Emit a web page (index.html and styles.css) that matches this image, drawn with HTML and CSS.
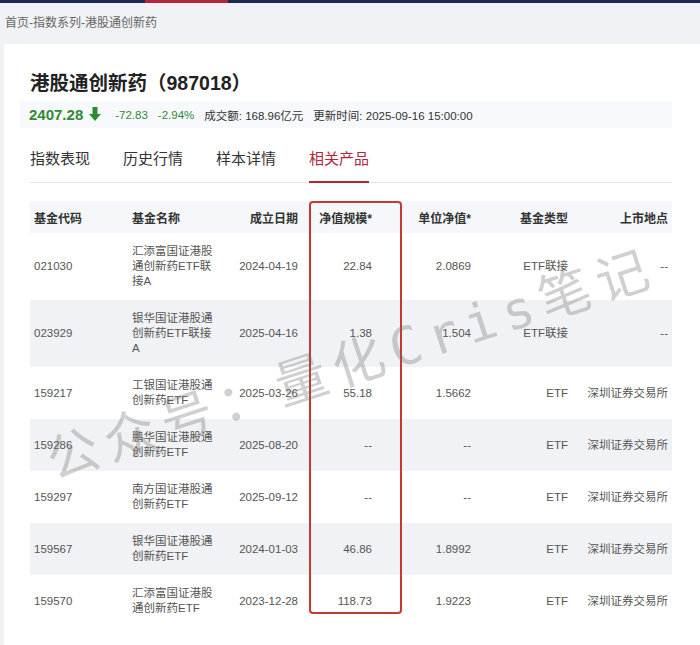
FILE: index.html
```html
<!DOCTYPE html>
<html lang="zh">
<head>
<meta charset="utf-8">
<link rel="stylesheet" href="styles.css">
</head>
<body>
<div class="topbar"><span class="topbar-active"></span></div>
<div class="crumb">首页-指数系列-港股通创新药</div>
<div class="card">
  <h1 class="title">港股通创新药（987018）</h1>
  <div class="stats">
    <span class="price">2407.28</span>
    <svg class="arrow" width="12" height="15" viewBox="0 0 12 15"><rect x="3.5" y="0" width="5" height="8" fill="#2f8a34"/><polygon points="0,7 12,7 6,14" fill="#2f8a34"/></svg>
    <span class="chg">-72.83</span>
    <span class="chg">-2.94%</span>
    <span class="info">成交额: 168.96亿元</span>
    <span class="info">更新时间: 2025-09-16 15:00:00</span>
  </div>
  <div class="tabs">
    <span class="tab">指数表现</span>
    <span class="tab">历史行情</span>
    <span class="tab">样本详情</span>
    <span class="tab active">相关产品</span>
  </div>
  <div class="table-wrap">
    <table class="funds">
      <colgroup>
        <col class="c1"><col class="c2"><col class="c3"><col class="c4"><col class="c5"><col class="c6"><col class="c7">
      </colgroup>
      <thead>
        <tr><th class="l">基金代码</th><th class="l">基金名称</th><th>成立日期</th><th>净值规模*</th><th>单位净值*</th><th>基金类型</th><th>上市地点</th></tr>
      </thead>
      <tbody>
        <tr><td class="l">021030</td><td class="l name">汇添富国证港股通创新药ETF联接A</td><td>2024-04-19</td><td>22.84</td><td>2.0869</td><td>ETF联接</td><td>--</td></tr>
        <tr class="alt"><td class="l">023929</td><td class="l name">银华国证港股通创新药ETF联接A</td><td>2025-04-16</td><td>1.38</td><td>1.504</td><td>ETF联接</td><td>--</td></tr>
        <tr><td class="l">159217</td><td class="l name">工银国证港股通创新药ETF</td><td>2025-03-26</td><td>55.18</td><td>1.5662</td><td>ETF</td><td>深圳证券交易所</td></tr>
        <tr class="alt"><td class="l">159286</td><td class="l name">鹏华国证港股通创新药ETF</td><td>2025-08-20</td><td>--</td><td>--</td><td>ETF</td><td>深圳证券交易所</td></tr>
        <tr><td class="l">159297</td><td class="l name">南方国证港股通创新药ETF</td><td>2025-09-12</td><td>--</td><td>--</td><td>ETF</td><td>深圳证券交易所</td></tr>
        <tr class="alt"><td class="l">159567</td><td class="l name">银华国证港股通创新药ETF</td><td>2024-01-03</td><td>46.86</td><td>1.8992</td><td>ETF</td><td>深圳证券交易所</td></tr>
        <tr><td class="l">159570</td><td class="l name">汇添富国证港股通创新药ETF</td><td>2023-12-28</td><td>118.73</td><td>1.9223</td><td>ETF</td><td>深圳证券交易所</td></tr>
      </tbody>
    </table>
    <div class="highlight"></div>
  </div>
</div>
<div class="watermark">公众号：量化Cris笔记</div>
</body>
</html>
```
FILE: styles.css
```css
html, body {
  margin: 0;
  padding: 0;
}
body {
  background: #f0f2f5;
  font-family: "Liberation Sans", "Noto Sans CJK SC", sans-serif;
  color: #333;
  width: 700px;
  height: 645px;
  overflow: hidden;
  position: relative;
}
.topbar {
  height: 3px;
  background: #1d2a57;
  display: flex;
}
.topbar-active {
  margin-left: 145px;
  width: 83px;
  background: #b3263a;
}
.crumb {
  height: 41px;
  line-height: 40px;
  padding-left: 5px;
  font-size: 12px;
  color: #666;
}
.card {
  background: #fff;
  margin-left: 4px;
  padding: 25px 28px 40px 16px;
  height: 560px;
}
.title {
  margin: 0 0 4px 10px;
  font-size: 19.5px;
  line-height: 28px;
  font-weight: bold;
  color: #222;
}
.stats {
  display: flex;
  align-items: center;
  height: 27px;
  background: #f7f9fc;
  padding-left: 9px;
  font-size: 11.5px;
}
.price {
  font-size: 15px;
  font-weight: bold;
  color: #2f8a34;
}
.arrow {
  margin-left: 6px;
  margin-right: 14px;
}
.chg {
  color: #2f8a34;
  margin-right: 10px;
}
.info {
  color: #333;
  margin-right: 10px;
}
.tabs {
  margin-left: 10px;
  display: flex;
  gap: 33px;
  border-bottom: 1px solid #e6e6e6;
  height: 54px;
  align-items: flex-end;
}
.tab {
  font-size: 15px;
  line-height: 22px;
  padding-bottom: 11px;
  margin-bottom: -1px;
  border-bottom: 2px solid transparent;
  color: #333;
}
.tab.active {
  color: #b3263a;
  border-bottom-color: #b3263a;
}
.table-wrap {
  position: relative;
  margin: 18px 0 0 10px;
}
.funds {
  width: 642px;
  border-collapse: collapse;
  table-layout: fixed;
  font-size: 11.5px;
}
.c1 { width: 98px; }
.c2 { width: 97px; }
.c3 { width: 77px; }
.c4 { width: 74px; }
.c5 { width: 99px; }
.c6 { width: 97px; }
.c7 { width: 100px; }
.funds th {
  background: #f5f7fa;
  height: 32px;
  padding: 0 4px;
  font-size: 12px;
  font-weight: bold;
  color: #333;
  text-align: right;
}
.funds td {
  padding: 11px 4px;
  line-height: 15px;
  color: #555;
  text-align: right;
  vertical-align: middle;
}
.funds td.name {
  padding-right: 9px;
}
.funds th.l, .funds td.l {
  text-align: left;
}
.funds tr.alt td {
  background: #f1f2f5;
}
.highlight {
  position: absolute;
  left: 279px;
  top: 0;
  width: 89px;
  height: 409px;
  border: 2px solid #c7392f;
  border-radius: 4px;
}
.watermark {
  position: absolute;
  left: 350px;
  top: 360px;
  transform: translate(-50%, -50%) rotate(-18deg);
  white-space: nowrap;
  font-family: "DejaVu Sans Mono", "Noto Sans CJK SC", monospace;
  font-size: 52px;
  letter-spacing: 8px;
  color: rgba(110, 110, 110, 0.32);
  pointer-events: none;
}
```
